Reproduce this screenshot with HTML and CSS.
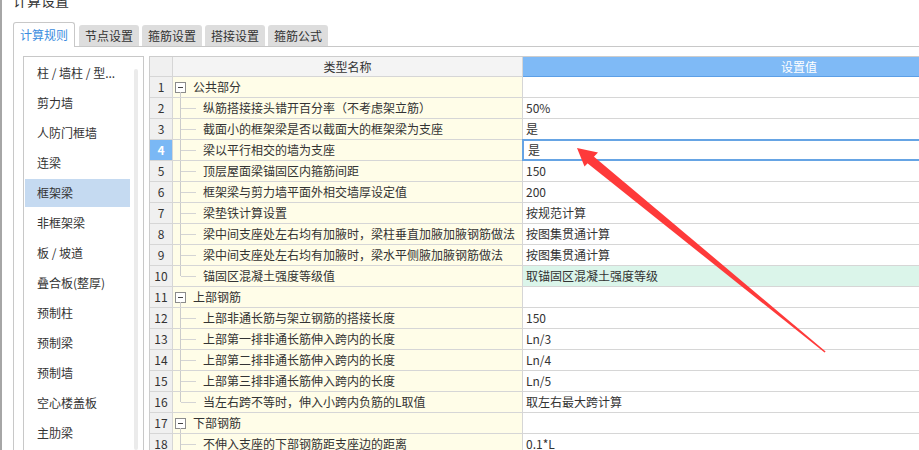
FILE: index.html
```html
<!DOCTYPE html>
<html lang="zh-CN">
<head>
<meta charset="utf-8">
<title>计算设置</title>
<link rel="stylesheet" href="styles.css">
</head>
<body>
<div class="win">
  <div class="title">计算设置</div>
  <div class="tabs">
    <div class="tab active">计算规则</div>
    <div class="tab">节点设置</div>
    <div class="tab">箍筋设置</div>
    <div class="tab">搭接设置</div>
    <div class="tab">箍筋公式</div>
  </div>
  <div class="panel">
    <div class="side">
      <ul class="list">
        <li class="item">柱 / 墙柱 / 型...</li>
        <li class="item">剪力墙</li>
        <li class="item">人防门框墙</li>
        <li class="item">连梁</li>
        <li class="item sel">框架梁</li>
        <li class="item">非框架梁</li>
        <li class="item">板 / 坡道</li>
        <li class="item">叠合板(整厚)</li>
        <li class="item">预制柱</li>
        <li class="item">预制梁</li>
        <li class="item">预制墙</li>
        <li class="item">空心楼盖板</li>
        <li class="item">主肋梁</li>
      </ul>
      <div class="scroll"></div>
    </div>
    <div class="grid">
      <div class="row head"><div class="num"></div><div class="name">类型名称</div><div class="val">设置值</div></div>
      <div class="row"><div class="num">1</div><div class="name parent"><span class="box"></span><span>公共部分</span></div><div class="val"></div></div>
      <div class="row"><div class="num">2</div><div class="name child">纵筋搭接接头错开百分率（不考虑架立筋）</div><div class="val">50%</div></div>
      <div class="row"><div class="num">3</div><div class="name child">截面小的框架梁是否以截面大的框架梁为支座</div><div class="val">是</div></div>
      <div class="row"><div class="num sel">4</div><div class="name child">梁以平行相交的墙为支座</div><div class="val sel">是</div></div>
      <div class="row"><div class="num">5</div><div class="name child">顶层屋面梁锚固区内箍筋间距</div><div class="val">150</div></div>
      <div class="row"><div class="num">6</div><div class="name child">框架梁与剪力墙平面外相交墙厚设定值</div><div class="val">200</div></div>
      <div class="row"><div class="num">7</div><div class="name child">梁垫铁计算设置</div><div class="val">按规范计算</div></div>
      <div class="row"><div class="num">8</div><div class="name child">梁中间支座处左右均有加腋时，梁柱垂直加腋加腋钢筋做法</div><div class="val">按图集贯通计算</div></div>
      <div class="row"><div class="num">9</div><div class="name child">梁中间支座处左右均有加腋时，梁水平侧腋加腋钢筋做法</div><div class="val">按图集贯通计算</div></div>
      <div class="row"><div class="num">10</div><div class="name child last">锚固区混凝土强度等级值</div><div class="val green">取锚固区混凝土强度等级</div></div>
      <div class="row"><div class="num">11</div><div class="name parent"><span class="box"></span><span>上部钢筋</span></div><div class="val"></div></div>
      <div class="row"><div class="num">12</div><div class="name child">上部非通长筋与架立钢筋的搭接长度</div><div class="val">150</div></div>
      <div class="row"><div class="num">13</div><div class="name child">上部第一排非通长筋伸入跨内的长度</div><div class="val">Ln/3</div></div>
      <div class="row"><div class="num">14</div><div class="name child">上部第二排非通长筋伸入跨内的长度</div><div class="val">Ln/4</div></div>
      <div class="row"><div class="num">15</div><div class="name child">上部第三排非通长筋伸入跨内的长度</div><div class="val">Ln/5</div></div>
      <div class="row"><div class="num">16</div><div class="name child last">当左右跨不等时，伸入小跨内负筋的L取值</div><div class="val">取左右最大跨计算</div></div>
      <div class="row"><div class="num">17</div><div class="name parent"><span class="box"></span><span>下部钢筋</span></div><div class="val"></div></div>
      <div class="row"><div class="num">18</div><div class="name child">不伸入支座的下部钢筋距支座边的距离</div><div class="val">0.1*L</div></div>
    </div>
  </div>
</div>
<svg class="arrow" width="919" height="450" viewBox="0 0 919 450">
  <polygon points="577,148 598,152.5 584.5,166.5" fill="#fe3a3a"/>
  <polygon points="592.5,155.5 825.6,351.4 824.6,352.6 586.5,162.5" fill="#fe3a3a"/>
</svg>
</body>
</html>
```
FILE: styles.css
```css
* { box-sizing: border-box; }
body {
  margin: 0;
  width: 919px;
  height: 450px;
  overflow: hidden;
  position: relative;
  background: #fff;
  color: #333;
  font-family: "Noto Sans CJK SC", "Microsoft YaHei", sans-serif;
  font-size: 12px;
}
.win {
  height: 450px;
  border-left: 2px solid #a6a6a6;
  padding-left: 11px;
  display: flex;
  flex-direction: column;
}
.title {
  margin-top: -9px;
  height: 18px;
  line-height: 18px;
  font-size: 14px;
  flex-shrink: 0;
}
.tabs {
  height: 37px;
  flex-shrink: 0;
  display: flex;
  align-items: flex-end;
  gap: 3px;
}
.tab {
  height: 21px;
  line-height: 21px;
  padding: 0 6px;
  background: #dddddd;
  border-radius: 3px 3px 0 0;
  color: #333;
  white-space: nowrap;
}
.tab.active {
  height: 25px;
  line-height: 23px;
  background: #fff;
  border: 1px solid #c8c8c8;
  border-bottom: none;
  color: #3b8de0;
  margin-bottom: -1px;
  margin-right: 1px;
  position: relative;
  z-index: 1;
}
.panel {
  flex: 1;
  min-height: 0;
  border-left: 1px solid #c8c8c8;
  border-top: 1px solid #c8c8c8;
  padding: 9px 0 0 9px;
  display: flex;
  gap: 5px;
}
.side {
  width: 121px;
  flex-shrink: 0;
  border: 1px solid #c8c8c8;
  border-bottom: none;
  display: flex;
}
.list {
  list-style: none;
  margin: 0 0 0 1px;
  padding: 2px 0 0 0;
  width: 105px;
}
.item {
  height: 28px;
  line-height: 28px;
  margin-bottom: 2px;
  padding-left: 12px;
  white-space: nowrap;
}
.item.sel { background: #c5daf1; }
.scroll {
  width: 4px;
  margin-left: 4px;
  margin-top: 12px;
  background: #ebebeb;
  border-radius: 2px;
}
.grid {
  flex: 1;
  min-width: 0;
  overflow: hidden;
  border-left: 1px solid #cdcdcd;
  border-top: 1px solid #cdcdcd;
}
.row {
  display: grid;
  grid-template-columns: 23px 350px 550px;
  height: 21px;
}
.row.head { height: 20px; }
.row > div {
  border-right: 1px solid #d6d6d6;
  border-bottom: 1px solid #d6d6d6;
  line-height: 20px;
  white-space: nowrap;
  overflow: hidden;
}
.row.head > div { line-height: 19px; }
.num {
  background: #f0f0f0;
  text-align: center;
}
.num.sel {
  background: #7ab8f5;
  color: #fff;
  font-weight: bold;
}
.name {
  background: #fffde8;
  position: relative;
  padding-left: 30px;
}
.head .num { background: #f0f0f0; }
.head .name {
  background: #f4f4f4;
  text-align: center;
  padding-left: 0;
}
.head .val {
  background: #7fbaf6;
  color: #fff;
  text-align: center;
  border-bottom-color: #5c9fe6;
  border-left: 1px solid #6aa8ea;
  margin-left: -1px;
}
.val { padding-left: 3px; background: #fff; }
.val.green { background: #dbf5ea; }
.val.sel {
  position: relative;
  overflow: visible;
  padding-left: 5px;
}
.val.sel::after {
  content: "";
  position: absolute;
  left: -1px;
  top: -1px;
  right: 0;
  bottom: -1px;
  border: 2px solid #66a4e4;
}
.name.child::before {
  content: "";
  position: absolute;
  left: 7px;
  top: 0;
  bottom: -1px;
  width: 1px;
  background: #cbcbcb;
}
.name.child.last::before { bottom: 10px; }
.name.child::after {
  content: "";
  position: absolute;
  left: 8px;
  top: 10px;
  width: 15px;
  height: 1px;
  background: #d4d4d4;
}
.name.parent {
  display: flex;
  align-items: center;
  gap: 7px;
  padding-left: 2px;
}
.name.parent::before {
  content: "";
  position: absolute;
  left: 7px;
  top: 15px;
  bottom: -1px;
  width: 1px;
  background: #cbcbcb;
}
.box {
  width: 11px;
  height: 11px;
  border: 1px solid #8c8c8c;
  background: #fff;
  flex-shrink: 0;
  display: flex;
  align-items: center;
  justify-content: center;
}
.box::after {
  content: "";
  width: 5px;
  height: 1px;
  background: #444;
}
.arrow {
  position: absolute;
  left: 0;
  top: 0;
  pointer-events: none;
}
```
